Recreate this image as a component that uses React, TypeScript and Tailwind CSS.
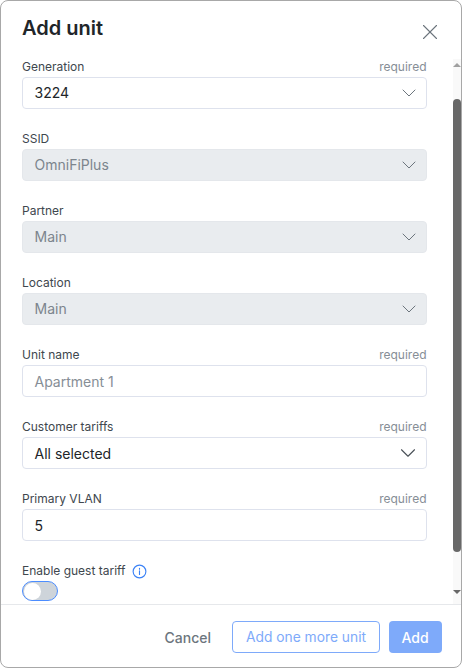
import React from "react";
import { ChevronDown, X } from "lucide-react";

const fields = [
  { label: "Generation", value: "3224", required: true, select: true },
  { label: "SSID", value: "OmniFiPlus", disabled: true, select: true },
  { label: "Partner", value: "Main", disabled: true, select: true },
  { label: "Location", value: "Main", disabled: true, select: true },
  { label: "Unit name", value: "Apartment 1", required: true, placeholder: true, low: true },
  { label: "Customer tariffs", value: "All selected", required: true, select: true, dark: true, low: true },
  { label: "Primary VLAN", value: "5", required: true, low: true },
];

type FieldProps = {
  label: string;
  value: string;
  required?: boolean;
  disabled?: boolean;
  select?: boolean;
  placeholder?: boolean;
  dark?: boolean;
  low?: boolean;
};

const Field = ({ label, value, required, disabled, select, placeholder, dark, low }: FieldProps) => {
  return (
    <div className="mb-[22px]">
      <div className="flex justify-between items-end h-[18px] pb-[2px] pr-[0.5px] text-[12px] leading-[16px]">
        <span className="text-[#40474e]">{label}</span>
        {required && <span className="text-[#868e96]">required</span>}
      </div>
      <div
        className={`flex items-center justify-between h-[32px] pl-[11.5px] pr-[5.5px] rounded-[4px] border text-[14px] ${
          disabled ? "bg-[#e9ecef] border-[#e4e7eb] text-[#7c858d]" : "bg-white border-[#dee2ed]"
        } ${placeholder ? "text-[#868e96]" : ""} ${!disabled && !placeholder ? "text-[#212529]" : ""}`}
      >
        <span className={low ? "" : "pb-[2px]"}>{value}</span>
        {select &&
          (dark ? (
            <ChevronDown className="w-[26px] h-[26px] text-[#495057]" strokeWidth={1} />
          ) : (
            <ChevronDown className="w-[24px] h-[24px] text-[#6c757d]" strokeWidth={1} />
          ))}
      </div>
    </div>
  );
};

export default function App() {
  return (
    <div className="w-[462px] h-[668px] bg-white border border-[#a8a8a8] rounded-[8px] flex flex-col overflow-hidden font-['Inter',sans-serif]">
      <div className="h-[58px] shrink-0 flex justify-between pl-[21px] pr-[18.5px]">
        <h2 className="mt-[13px] text-[20px] leading-[28px] font-semibold text-[#212529]">Add unit</h2>
        <X className="mt-[18px] w-[26px] h-[26px] text-[#6c757d]" strokeWidth={1} />
      </div>
      <div className="flex-1 flex min-h-0">
        <div className="flex-1 pl-[21px] pr-[26px] pt-0 overflow-hidden">
          {fields.map((f) => (
            <Field key={f.label} {...f} />
          ))}
          <div className="flex items-center gap-[6px] h-[16px] mb-[2px] text-[12px] text-[#40474e]">
            <span>Enable guest tariff</span>
            <svg width="15" height="15" viewBox="0 0 16 16" fill="none" stroke="#3b82f6" strokeWidth="1.2">
              <circle cx="8" cy="8" r="6.8" />
              <path d="M8 7.2v4M8 4.6v.9" strokeLinecap="round" />
            </svg>
          </div>
          <div className="w-[36px] h-[20px] rounded-full bg-[#ced4da] border border-[#4c8dff] flex items-center pl-[1px]">
            <div className="w-[17px] h-[17px] rounded-full bg-white" />
          </div>
        </div>
        <div className="w-[8px] shrink-0 bg-[#f9f9f9] flex flex-col items-center">
          <div className="mt-[4px] w-0 h-0 border-x-[4px] border-x-transparent border-b-[4px] border-b-[#a0a0a0]" />
          <div className="mt-[32px] w-[8px] h-[453px] bg-[#686868] rounded-[4px]" />
          <div className="mt-[38px] w-0 h-0 border-x-[4px] border-x-transparent border-t-[4px] border-t-[#686868]" />
        </div>
      </div>
      <div className="h-[63px] shrink-0 border-t border-[#e6e8eb] flex items-start justify-end pt-[16px] pr-[19px] text-[14px] font-medium">
        <button className="h-[32px] px-3 mr-[9px] text-[#6c757d] font-medium">Cancel</button>
        <button className="h-[32px] w-[148px] mr-[9px] rounded-[4px] border border-[#7eaafa] text-[#7eaafa] text-[13.8px] font-normal bg-white">Add one more unit</button>
        <button className="h-[32px] w-[53px] pr-[1px] rounded-[4px] bg-[#7eaafa] text-white">Add</button>
      </div>
    </div>
  );
}
